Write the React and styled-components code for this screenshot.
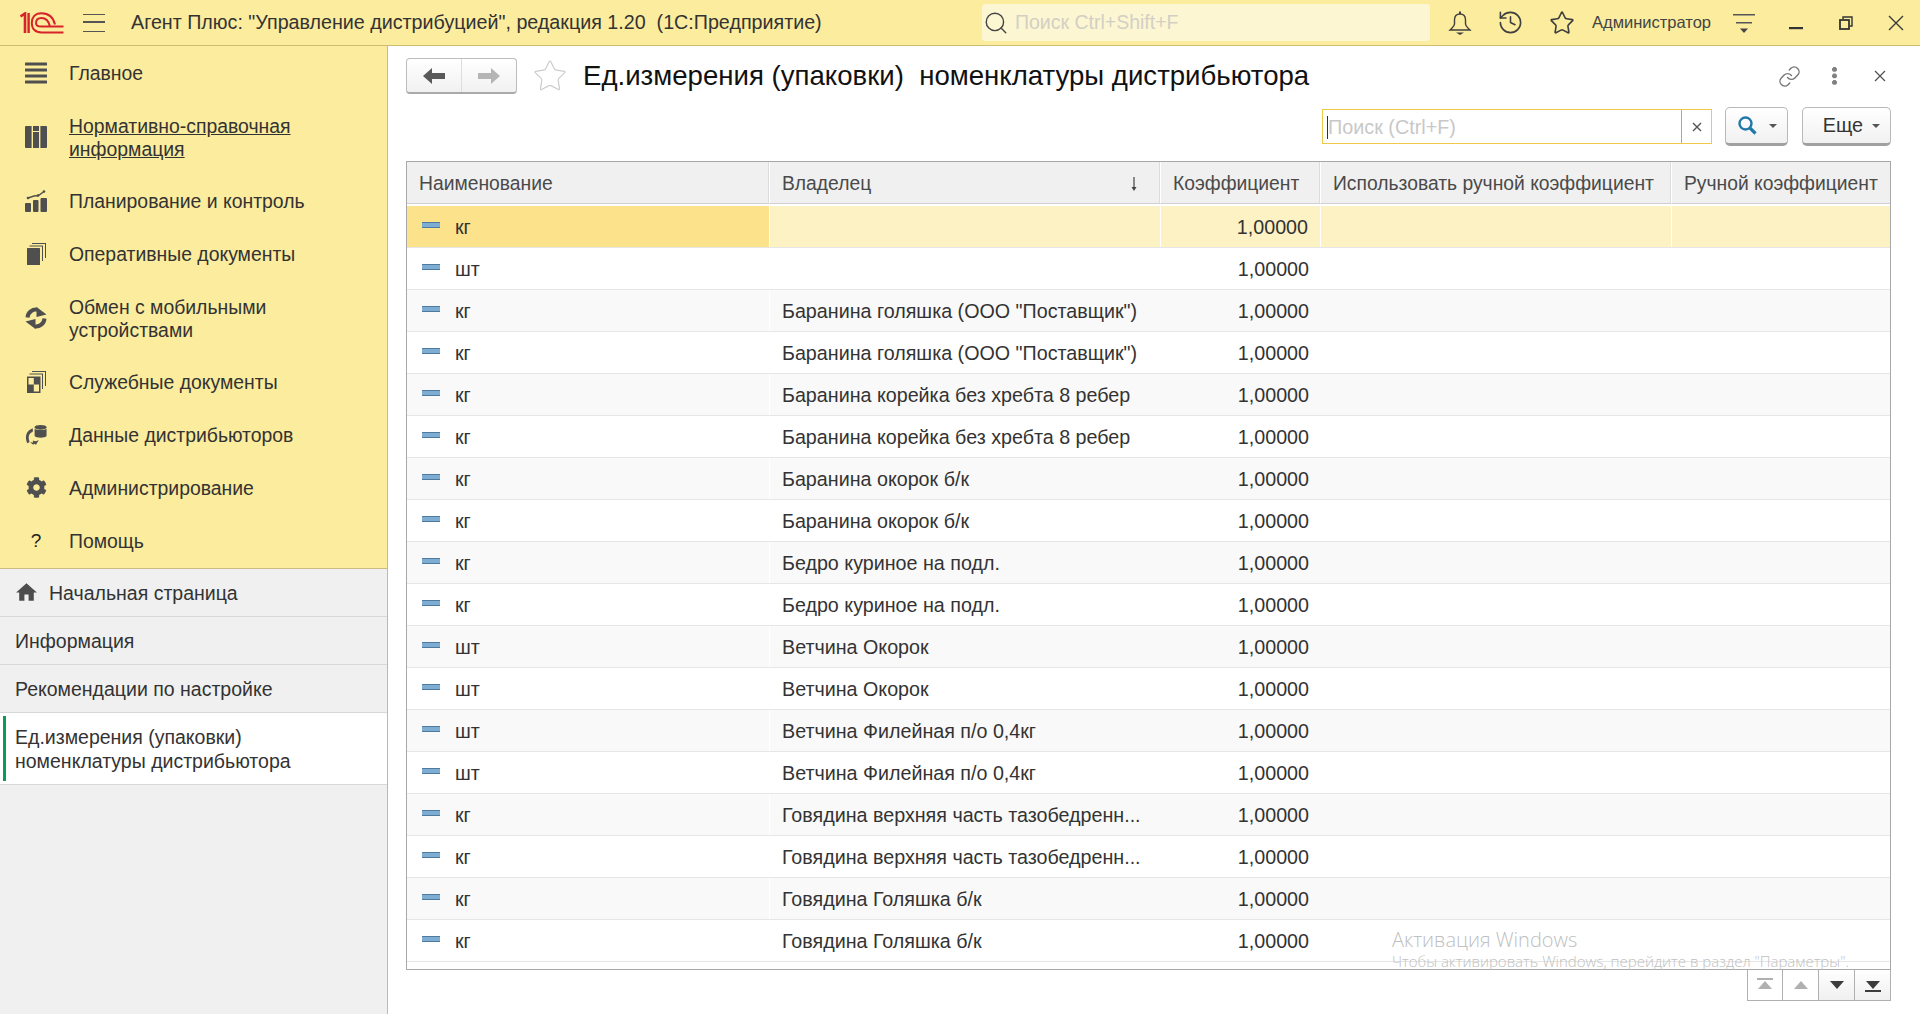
import React from "react";
import styled, { createGlobalStyle } from "styled-components";
import { History, Star, Search, Link } from "lucide-react";
import { FaCog } from "react-icons/fa";
import { MdHome } from "react-icons/md";

const NAV = [
  { icon: "lines", label: "Главное" },
  { icon: "columns", label: "Нормативно-справочная информация", link: true, tall: true },
  { icon: "chart", label: "Планирование и контроль" },
  { icon: "docs", label: "Оперативные документы" },
  { icon: "sync", label: "Обмен с мобильными устройствами", tall: true },
  { icon: "service", label: "Служебные документы" },
  { icon: "data", label: "Данные дистрибьюторов" },
  { icon: "gear", label: "Администрирование" },
  { icon: "help", label: "Помощь" },
];

const ROWS = [
  ["кг", ""],
  ["шт", ""],
  ["кг", 'Баранина голяшка (ООО "Поставщик")'],
  ["кг", 'Баранина голяшка (ООО "Поставщик")'],
  ["кг", "Баранина корейка без хребта 8 ребер"],
  ["кг", "Баранина корейка без хребта 8 ребер"],
  ["кг", "Баранина окорок б/к"],
  ["кг", "Баранина окорок б/к"],
  ["кг", "Бедро куриное на подл."],
  ["кг", "Бедро куриное на подл."],
  ["шт", "Ветчина Окорок"],
  ["шт", "Ветчина Окорок"],
  ["шт", "Ветчина Филейная п/о 0,4кг"],
  ["шт", "Ветчина Филейная п/о 0,4кг"],
  ["кг", "Говядина верхняя часть тазобедренн..."],
  ["кг", "Говядина верхняя часть тазобедренн..."],
  ["кг", "Говядина Голяшка б/к"],
  ["кг", "Говядина Голяшка б/к"],
];

const GlobalStyle = createGlobalStyle`
  html, body { margin: 0; padding: 0; height: 100%; background: #fff; }
  body { font-family: "Liberation Sans", Arial, sans-serif; color: #333; overflow: hidden; }
  * { box-sizing: border-box; }
`;

const Page = styled.div`
  width: 1920px;
  height: 1014px;
  display: flex;
  flex-direction: column;
  position: relative;
  overflow: hidden;
`;

const TopBar = styled.header`
  height: 46px;
  flex: none;
  display: flex;
  align-items: center;
  background: #fbec9e;
  border-bottom: 1px solid #cdbd72;
  padding-left: 20px;
  overflow: hidden;
  & > * {
    flex: none;
  }
`;

const Burger = styled.div`
  width: 22px;
  height: 18px;
  margin-left: 19px;
  border-top: 1.5px solid #555;
  border-bottom: 1.5px solid #555;
  position: relative;
  &::after {
    content: "";
    position: absolute;
    left: 0;
    right: 0;
    top: 6.5px;
    height: 1.5px;
    background: #555;
  }
`;

const AppTitle = styled.div`
  margin-left: 26px;
  width: 851px;
  font-size: 19.7px;
  color: #333;
  white-space: pre;
`;

const GlobalSearch = styled.div`
  width: 448px;
  height: 37px;
  background: #fdf6d2;
  border-radius: 3px;
  display: flex;
  align-items: center;
  gap: 6px;
  padding-left: 1px;
  font-size: 19.5px;
  color: #d2d0c4;
`;

const TopIcons = styled.div`
  display: flex;
  align-items: center;
  color: #3f3f3f;
  margin-left: 4px;
`;

const TopIconSlot = styled.div`
  width: 51px;
  display: flex;
  justify-content: center;
`;

const UserName = styled.div`
  margin-left: 5px;
  width: 121px;
  font-size: 16.5px;
  color: #444;
  white-space: nowrap;
`;

const FilterIcon = styled.svg`
  margin-left: 20px;
`;

const WindowButtons = styled.div`
  display: flex;
  align-items: center;
  margin-left: 16px;
`;

const WinSlot = styled.div`
  width: 50px;
  height: 30px;
  display: flex;
  align-items: center;
  justify-content: center;
  color: #333;
`;

const Body = styled.div`
  flex: 1;
  display: flex;
  min-height: 0;
`;

const Sidebar = styled.aside`
  width: 388px;
  flex: none;
  background: #f0f0f0;
  border-right: 1px solid #cdbd72;
  display: flex;
  flex-direction: column;
`;

const NavList = styled.nav`
  background: #fbec9e;
  border-bottom: 1px solid #c9bc80;
  padding-bottom: 1px;
`;

const NavItem = styled.div`
  display: flex;
  align-items: center;
  height: ${(p) => (p.$tall ? "75px" : "53px")};
  padding-left: 25px;
`;

const NavIconBox = styled.div`
  width: 22px;
  height: 22px;
  flex: none;
  color: #4f4f4f;
  display: flex;
  align-items: center;
  justify-content: center;
`;

const HelpMark = styled.span`
  font-size: 19px;
  color: #222;
`;

const NavLabel = styled.div`
  margin-left: 22px;
  padding-top: 2px;
  width: 280px;
  font-size: 19.4px;
  line-height: 23px;
  color: #333;
  text-decoration: ${(p) => (p.$link ? "underline" : "none")};
`;

const Tab = styled.div`
  position: relative;
  display: flex;
  align-items: center;
  gap: 10px;
  height: ${(p) => (p.$active ? "72px" : "48px")};
  padding-left: ${(p) => (p.$home ? "14px" : "15px")};
  background: ${(p) => (p.$active ? "#fff" : "transparent")};
  border-bottom: 1px solid #d8d8d8;
  font-size: 19.5px;
  line-height: 24px;
  color: #333;
  ${(p) =>
    p.$active &&
    `&::before {
      content: "";
      position: absolute;
      left: 3px;
      top: 3px;
      bottom: 3px;
      width: 3px;
      background: #0b9b57;
    }`}
`;

const Main = styled.main`
  flex: 1;
  min-width: 0;
  display: flex;
  flex-direction: column;
  padding: 12px 29px 0 18px;
`;

const TitleRow = styled.div`
  display: flex;
  align-items: center;
  height: 36px;
`;

const NavButtons = styled.div`
  width: 111px;
  height: 36px;
  display: flex;
  border: 1px solid #bcbcbc;
  border-bottom: 2px solid #aaa;
  border-radius: 4px;
  background: linear-gradient(#fff, #f1f1f1);
`;

const NavButton = styled.div`
  flex: 1;
  display: flex;
  align-items: center;
  justify-content: center;
  & + & {
    border-left: 1px solid #ddd;
  }
`;

const Mirrored = styled.span`
  display: flex;
  transform: scaleX(-1);
`;

const TitleStar = styled.div`
  width: 36px;
  margin-left: 15px;
  display: flex;
  justify-content: center;
  color: #ccc;
`;

const Title = styled.h1`
  margin: 0 0 0 15px;
  flex: 1;
  font-size: 27.6px;
  font-weight: 400;
  color: #111;
  white-space: pre;
`;

const FormTools = styled.div`
  display: flex;
  align-items: center;
  color: #777;
`;

const ToolSlot = styled.div`
  width: 45px;
  display: flex;
  justify-content: center;
  margin-right: ${(p) => p.$end || 0};
`;

const Dots = styled.div`
  width: 5px;
  height: 18px;
  background: radial-gradient(circle at 2.5px 2.5px, #808080 2.2px, transparent 2.7px) 0 0 / 5px 6.5px;
`;

const SearchRow = styled.div`
  display: flex;
  justify-content: flex-end;
  align-items: center;
  margin-top: 13px;
  height: 39px;
`;

const SearchField = styled.div`
  width: 390px;
  height: 35px;
  display: flex;
  border: 1px solid #efc94c;
  background: #fff;
`;

const SearchInput = styled.div`
  flex: 1;
  display: flex;
  align-items: center;
  font-size: 19.8px;
  color: #c8c8c8;
  padding: 2px 0 0 4px;
  &::before {
    content: "";
    width: 1px;
    height: 23px;
    background: #333;
  }
`;

const ClearButton = styled.div`
  width: 30px;
  display: flex;
  align-items: center;
  justify-content: center;
  border-left: 1px solid #a8a8a8;
`;

const ToolButton = styled.div`
  width: ${(p) => p.$w};
  height: 39px;
  margin-left: ${(p) => p.$gap};
  display: flex;
  align-items: center;
  justify-content: flex-end;
  gap: ${(p) => p.$inner};
  padding-right: 10px;
  border: 1px solid #b9b9b9;
  border-bottom: 3px solid #a0a0a0;
  border-radius: 5px;
  background: linear-gradient(#fff, #f1f1f1);
  font-size: 19.8px;
  color: #333;
`;

const Caret = styled.span`
  width: 0;
  height: 0;
  border-left: 4px solid transparent;
  border-right: 4px solid transparent;
  border-top: 4px solid #555;
`;

const Table = styled.div`
  margin-top: 15px;
  flex: none;
  height: 809px;
  border: 1px solid #a8a8a8;
  overflow: hidden;
  position: relative;
`;

const columns = "363px 391px 160px 351px 218px";

const HeadRow = styled.div`
  display: grid;
  grid-template-columns: ${columns};
  height: 44px;
  padding-bottom: 2px;
  background: #fff;
`;

const HeadCell = styled.div`
  display: flex;
  align-items: center;
  justify-content: space-between;
  padding: 2px 12px 0;
  background: #f0f0f0;
  border-right: ${(p) => (p.$last ? "none" : "1px solid #fff")};
  box-shadow: ${(p) => (p.$last ? "none" : "inset -1px 0 0 #dcdcdc")};
  border-bottom: 1px solid #d0d0d0;
  font-size: 19.3px;
  color: #4a4a4a;
  white-space: nowrap;
`;

const SortArrow = styled.svg`
  margin-right: 8px;
`;

const Row = styled.div`
  display: grid;
  grid-template-columns: ${columns};
  height: 42px;
  background: ${(p) => (p.$selected ? "#fdf2c4" : p.$alt ? "#f9f9f9" : "#fff")};
  border-bottom: 1px solid #e6e6e6;
`;

const Cell = styled.div`
  display: flex;
  align-items: center;
  justify-content: ${(p) => (p.$right ? "flex-end" : "flex-start")};
  padding: 2px 12px 0;
  font-size: 19.7px;
  color: #333;
  white-space: nowrap;
  overflow: hidden;
  border-right: ${(p) => (p.$sep ? "1px solid #fff" : "none")};
`;

const NameCell = styled(Cell)`
  background: ${(p) => (p.$selected ? "#fde28c" : "transparent")};
  padding-left: 15px;
  gap: 15px;
`;

const UnitMark = styled.span`
  width: 18px;
  height: 6px;
  flex: none;
  margin-top: -5px;
  background: #7dadd3;
  border: 1px solid #4d7a9e;
  border-width: 1px 0 1px;
`;

const Pager = styled.div`
  display: flex;
  justify-content: flex-end;
`;

const PageButton = styled.div`
  width: 36px;
  height: 31px;
  display: flex;
  align-items: center;
  justify-content: center;
  border: 1px solid #b0b0b0;
  border-top: none;
  background: ${(p) => (p.$on ? "linear-gradient(#fff, #f0f0f0)" : "#fff")};
  & + & {
    border-left: none;
  }
`;

const Watermark = styled.div`
  position: absolute;
  left: 1392px;
  top: 926px;
  font-family: "Open Sans", sans-serif;
  font-weight: 300;
  color: #c0c0c0;
  pointer-events: none;
  white-space: nowrap;
`;

const WatermarkTitle = styled.div`
  font-size: 20px;
  line-height: 28px;
`;

const WatermarkNote = styled.div`
  font-size: 15px;
  line-height: 15px;
`;

function Logo() {
  return (
    <svg width="44" height="22" viewBox="0 0 44 22" fill="none" stroke="#d7232a" strokeWidth="2">
      <path d="M0.5 4.5 L5 1.5 V21" strokeWidth="2.6" />
      <path d="M8.6 1 V21" strokeWidth="2.4" />
      <path d="M35 12.5 C33 4 27 1.2 21.5 1.2 C14.5 1.2 11.8 6 11.8 11 C11.8 17 15.5 20.4 21.5 20.4 H43.5" />
      <path d="M30 14.4 C28.5 8 25.5 6 21.5 6 C17.5 6 16 8.2 16 11 C16 13.8 18.3 14.6 21.5 14.6 H43.5" />
    </svg>
  );
}

function SyncHalf() {
  return (
    <>
      <path d="M2.5 10.5 A8.6 8.6 0 0 1 12.5 2.6" fill="none" stroke="currentColor" strokeWidth="4" />
      <polygon points="11.5,0 11.5,10 21.5,7.5" />
    </>
  );
}

function NavIcon({ name }) {
  if (name === "gear") return <FaCog size={21} />;
  if (name === "help") return <HelpMark>?</HelpMark>;
  if (name === "sync")
    return (
      <svg width="22" height="22" viewBox="0 0 22 22" fill="currentColor">
        <SyncHalf />
        <g transform="rotate(180 11 11)">
          <SyncHalf />
        </g>
      </svg>
    );
  if (name === "lines")
    return (
      <svg width="22" height="22" viewBox="0 0 22 22" fill="currentColor">
        <rect y="0.5" width="22" height="3" rx="0.5" />
        <rect y="6.5" width="22" height="3" rx="0.5" />
        <rect y="12.5" width="22" height="3" rx="0.5" />
        <rect y="18.5" width="22" height="3" rx="0.5" />
      </svg>
    );
  if (name === "columns")
    return (
      <svg width="22" height="22" viewBox="0 0 22 22" fill="currentColor">
        <rect width="22" height="22" rx="1" />
        <path d="M6.6 0 h1.4 v22 H6.6z M14 0 h1.4 v22 H14z M6.6 5 h8.8 v1 H6.6z" fill="#fbec9e" />
      </svg>
    );
  if (name === "chart")
    return (
      <svg width="22" height="22" viewBox="0 0 22 22" fill="currentColor">
        <rect x="0" y="13" width="6" height="9" rx="1" />
        <rect x="8" y="10" width="5.5" height="12" rx="1" />
        <rect x="15.5" y="8" width="6.5" height="14" rx="1" />
        <path d="M3 8 L9 6 L13.5 5.5 L19 1.5" fill="none" stroke="currentColor" strokeWidth="1.4" />
        <circle cx="3" cy="8" r="1.3" />
        <circle cx="13" cy="5.5" r="1.3" />
        <circle cx="19" cy="1.5" r="1.3" />
      </svg>
    );
  if (name === "docs")
    return (
      <svg width="19" height="22" viewBox="0 0 19 22" fill="currentColor">
        <rect x="0" y="5" width="13" height="17" rx="0.5" />
        <path d="M2.5 3.5 V2.5 H16 V18 H15 V3.5z M5 1 V0 H19 V15 H18 V1z" />
      </svg>
    );
  if (name === "service")
    return (
      <svg width="19" height="22" viewBox="0 0 19 22" fill="currentColor">
        <path d="M0 5.5 H13.5 V22 H0z M6.8 13.5 V20.5 H12 V13.5z M1.5 7 V13.5 H6.8 V7z" fillRule="evenodd" />
        <path d="M2.5 3.5 V2.5 H16 V18 H15 V3.5z M5 1 V0 H19 V15 H18 V1z" />
      </svg>
    );
  if (name === "data")
    return (
      <svg width="24" height="22" viewBox="0 0 24 22" fill="currentColor">
        <ellipse cx="17" cy="2.6" rx="6.5" ry="2.6" />
        <path d="M10.5 4.2 C12 6 22 6 23.5 4.2 V12 C22 14.5 12 14.5 10.5 12z" />
        <path d="M8.5 3.5 C2 6 -1 12 2.5 20 L5 18.5 C3 13 4 9.5 8.5 7.5z" />
        <path d="M5.5 19 L11 19.5 L9 21.5z M8.5 17 C11 18 13 18 15 16.5 L12 21.5 L9 20z" />
      </svg>
    );
  return null;
}

function BellIcon() {
  return (
    <svg width="24" height="26" viewBox="0 0 24 26" fill="none" stroke="currentColor" strokeWidth="1.4">
      <path d="M12 4 C8 4 6.5 7 6.5 10 V14 C6.5 16.5 4 18 2 20 H22 C20 18 17.5 16.5 17.5 14 V10 C17.5 7 16 4 12 4z" />
      <path d="M12 1.5 V4" strokeWidth="2" />
      <path d="M8 22.5 H16 L12 25z" fill="currentColor" stroke="none" />
    </svg>
  );
}

function Triangle({ dir, color, bar }) {
  const shape = dir === "up" ? "2,11 16,11 9,3" : "2,3 16,3 9,11";
  const barY = dir === "up" ? 0 : 12;
  return (
    <svg width="18" height="14" viewBox="0 0 18 14" fill={color}>
      <polygon points={shape} />
      {bar && <rect x="1" y={barY} width="16" height="2" />}
    </svg>
  );
}

function ArrowLeft({ color }) {
  return (
    <svg width="22" height="16" viewBox="0 0 22 16" fill={color}>
      <path d="M0 8 L9 0 V5 H22 V11 H9 V16z" />
    </svg>
  );
}

export default function App() {
  return (
    <Page>
      <GlobalStyle />
      <TopBar>
        <Logo />
        <Burger />
        <AppTitle>{'Агент Плюс: "Управление дистрибуцией", редакция 1.20  (1С:Предприятие)'}</AppTitle>
        <GlobalSearch>
          <Search size={26} strokeWidth={1.3} color="#444" />
          Поиск Ctrl+Shift+F
        </GlobalSearch>
        <TopIcons>
          <TopIconSlot><BellIcon /></TopIconSlot>
          <TopIconSlot><History size={27} strokeWidth={1.4} /></TopIconSlot>
          <TopIconSlot><Star size={26} strokeWidth={1.5} /></TopIconSlot>
        </TopIcons>
        <UserName>Администратор</UserName>
        <FilterIcon width="22" height="22" viewBox="0 0 22 22">
          <path d="M0 2h22v1.4H0z M3 10h16v1.4H3z" fill="#555" />
          <path d="M7 16.5h8l-4 4.5z" fill="#444" />
        </FilterIcon>
        <WindowButtons>
          <WinSlot>
            <svg width="14" height="14" viewBox="0 0 14 14"><rect y="11" width="14" height="2.2" fill="#333" /></svg>
          </WinSlot>
          <WinSlot>
            <svg width="14" height="14" viewBox="0 0 14 14" fill="none" stroke="#333" strokeWidth="1.8">
              <rect x="1" y="4" width="9" height="9" />
              <path d="M4 3V1h9v9h-2" strokeWidth="1.4" />
            </svg>
          </WinSlot>
          <WinSlot>
            <svg width="16" height="16" viewBox="0 0 16 16" stroke="#3a3a3a" strokeWidth="1.4"><path d="M1 1l14 14M15 1L1 15" /></svg>
          </WinSlot>
        </WindowButtons>
      </TopBar>
      <Body>
        <Sidebar>
          <NavList>
            {NAV.map((item) => (
              <NavItem key={item.label} $tall={item.tall}>
                <NavIconBox>
                  <NavIcon name={item.icon} />
                </NavIconBox>
                <NavLabel $link={item.link}>{item.label}</NavLabel>
              </NavItem>
            ))}
          </NavList>
          <Tab $home>
            <MdHome size={25} color="#4d4d4d" />
            Начальная страница
          </Tab>
          <Tab>Информация</Tab>
          <Tab>Рекомендации по настройке</Tab>
          <Tab $active>
            Ед.измерения (упаковки)
            <br />
            номенклатуры дистрибьютора
          </Tab>
        </Sidebar>
        <Main>
          <TitleRow>
            <NavButtons>
              <NavButton><ArrowLeft color="#595959" /></NavButton>
              <NavButton>
                <Mirrored><ArrowLeft color="#b5b5b5" /></Mirrored>
              </NavButton>
            </NavButtons>
            <TitleStar><Star size={38} strokeWidth={0.8} /></TitleStar>
            <Title>{"Ед.измерения (упаковки)  номенклатуры дистрибьютора"}</Title>
            <FormTools>
              <ToolSlot><Link size={23} strokeWidth={1.5} /></ToolSlot>
              <ToolSlot><Dots /></ToolSlot>
              <ToolSlot $end="-11px">
                <svg width="12" height="12" viewBox="0 0 12 12" stroke="#555" strokeWidth="1.3"><path d="M1 1l10 10M11 1L1 11" /></svg>
              </ToolSlot>
            </FormTools>
          </TitleRow>
          <SearchRow>
            <SearchField>
              <SearchInput>Поиск (Ctrl+F)</SearchInput>
              <ClearButton>
                <svg width="10" height="10" viewBox="0 0 10 10" stroke="#555" strokeWidth="1.4"><path d="M1 1l8 8M9 1L1 9" /></svg>
              </ClearButton>
            </SearchField>
            <ToolButton $w="63px" $gap="13px" $inner="12px">
              <svg width="19" height="19" viewBox="0 0 19 19" fill="none" stroke="#1f78a8">
                <circle cx="7.5" cy="7.5" r="6" strokeWidth="2.4" />
                <path d="M11.8 11.8 L17.5 17.5" strokeWidth="3.2" />
              </svg>
              <Caret />
            </ToolButton>
            <ToolButton $w="89px" $gap="14px" $inner="9px">
              Еще
              <Caret />
            </ToolButton>
          </SearchRow>
          <Table>
            <HeadRow>
              <HeadCell>Наименование</HeadCell>
              <HeadCell>
                Владелец
                <SortArrow width="12" height="16" viewBox="0 0 12 16" stroke="#444" strokeWidth="1.2" fill="#444">
                  <path d="M6 1v11" />
                  <path d="M3.5 11h5L6 15z" stroke="none" />
                </SortArrow>
              </HeadCell>
              <HeadCell>Коэффициент</HeadCell>
              <HeadCell>Использовать ручной коэффициент</HeadCell>
              <HeadCell $last>Ручной коэффициент</HeadCell>
            </HeadRow>
            {ROWS.map(([unit, owner], i) => (
              <Row key={i} $selected={i === 0} $alt={i % 2 === 0}>
                <NameCell $selected={i === 0} $sep>
                  <UnitMark />
                  <span>{unit}</span>
                </NameCell>
                <Cell $sep={i === 0}>{owner}</Cell>
                <Cell $right $sep={i === 0}>1,00000</Cell>
                <Cell $sep={i === 0} />
                <Cell />
              </Row>
            ))}
          </Table>
          <Pager>
            <PageButton><Triangle dir="up" color="#b0b0b0" bar /></PageButton>
            <PageButton><Triangle dir="up" color="#b0b0b0" /></PageButton>
            <PageButton $on><Triangle dir="down" color="#3c3c3c" /></PageButton>
            <PageButton $on><Triangle dir="down" color="#3c3c3c" bar /></PageButton>
          </Pager>
        </Main>
      </Body>
      <Watermark>
        <WatermarkTitle>Активация Windows</WatermarkTitle>
        <WatermarkNote>Чтобы активировать Windows, перейдите в раздел "Параметры".</WatermarkNote>
      </Watermark>
    </Page>
  );
}
